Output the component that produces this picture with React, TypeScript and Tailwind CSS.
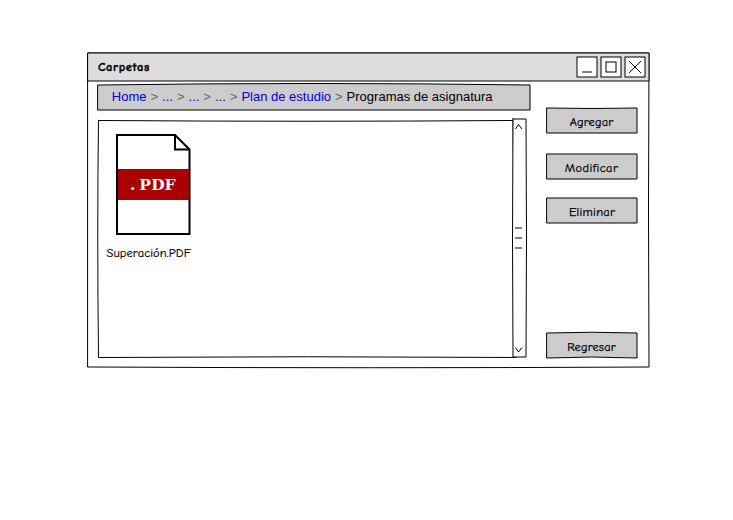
import type { ReactNode } from "react";

const comic = "font-['Comic_Sans_MS','Comic_Neue','Lato',sans-serif]";

function Sketch({ d, fill = "#ffffff" }: { d: string; fill?: string }) {
  return (
    <svg className="pointer-events-none absolute inset-0 h-full w-full overflow-visible" aria-hidden="true">
      <path d={d} fill={fill} stroke="#000" strokeWidth="1" strokeLinejoin="round" strokeLinecap="round" />
    </svg>
  );
}

function ControlBox({ children }: { children: ReactNode }) {
  return (
    <svg className="h-5 w-5 overflow-visible" fill="none" stroke="#000" strokeWidth="1">
      <rect width="20" height="20" fill="#fff" />
      {children}
    </svg>
  );
}

function SketchButton({ label, d, className, textClass }: { label: string; d: string; className: string; textClass: string }) {
  return (
    <button className={`relative flex h-[25px] w-[90px] items-center justify-center ${className}`}>
      <Sketch d={d} fill="#cccccc" />
      <span className={`relative mt-0.5 whitespace-nowrap text-[12.4px] leading-4 [-webkit-text-stroke:0.25px_#000] ${comic} ${textClass}`}>{label}</span>
    </button>
  );
}

function Sep() {
  return <span className="text-[#666666]">&gt;</span>;
}

function PdfFile() {
  return (
    <div className="ml-[8.5px] mt-[12px] w-[85px]">
      <svg className="ml-[9.5px] h-[102px] w-[76px]" viewBox="0 0 76 102">
        <path d="M1 2H59L73.5 16.5V101H1Z" fill="#fff" stroke="#000" strokeWidth="2" />
        <path d="M59 1.5V16.5H73.5" fill="none" stroke="#000" strokeWidth="2" />
        <rect x="2" y="36" width="71" height="31" fill="#a90000" />
        <text x="14 23.2 35.3 48.5" y="57" fill="#fff" className="font-['DejaVu_Serif',serif] text-[15.5px] font-bold">.PDF</text>
      </svg>
      <div className={`mt-[10px] whitespace-nowrap text-[12.4px] leading-4 tracking-[0.1px] [-webkit-text-stroke:0.2px_#000] ${comic}`}>Superación.PDF</div>
    </div>
  );
}

export default function App() {
  return (
    <main className="h-[520px] w-[733px] bg-white pl-[88px] pt-[53px] text-black">
      <section className="relative h-[314px] w-[561px]">
        <Sketch d="M0 0H561Q560 155 561 314Q285 315.5 0 314Z" />
        <header className="relative flex h-7 items-center justify-between pl-[10px] pr-1">
          <Sketch d="M0 0H561V28H0Z" fill="#dddddd" />
          <h1 className={`relative text-[12.4px] font-black leading-4 tracking-[0.65px] [-webkit-text-stroke:0.4px_#000] ${comic}`}>Carpetas</h1>
          <div className="relative flex gap-1">
            <ControlBox><path d="M5 15H15" /></ControlBox>
            <ControlBox><rect x="5" y="5" width="10" height="10" /></ControlBox>
            <ControlBox><path d="M4 4L16 16M16 4L4 16" /></ControlBox>
          </div>
        </header>
        <div className="relative flex pl-[10px]">
          <div className="w-[432px] pt-1">
            <nav className="relative h-[25px] pl-[13.8px]">
              <Sketch d="M0 0Q216 -3 432 0V25H0Z" fill="#cccccc" />
              <div className="relative flex gap-1 whitespace-nowrap font-['Liberation_Sans',Arial,sans-serif] text-[13px] leading-[24px] text-[#0000e6]">
                <a>Home</a><Sep /><a>...</a><Sep /><a>...</a><Sep /><a>...</a><Sep />
                <a>Plan de estudio</a><Sep /><span className="text-black">Programas de asignatura</span>
              </div>
            </nav>
            <div className="mt-[9px] flex h-[238px]">
              <div className="relative mt-[2px] h-[236px] w-[415px]">
                <Sketch d="M0.5 -0.5Q210 1 415 -0.5L418 236.5Q210 235 0.5 236.5Q-1 110 0.5 -0.5Z" />
                <div className="relative flow-root"><PdfFile /></div>
              </div>
              <div className="relative h-[238px] w-[13px]">
                <Sketch d="M0 0H13Q14 119 13 238H0Q-1 119 0 0Z" />
                <svg className="relative h-full w-full overflow-visible" fill="none" stroke="#000" strokeWidth="1">
                  <path d="M2.5 10L5.5 5.5L9 10M2.5 228.5L5.5 233L9 228.5" />
                  <path d="M2 109H9M2 119H9M2 129H9" />
                </svg>
              </div>
            </div>
          </div>
          <aside className="ml-[17px] pt-[27px]">
            <SketchButton label="Agregar" d="M0 0Q45 1 90 0V25H0Z" className="" textClass="-left-[0.5px] top-[0.5px] tracking-[0.15px]" />
            <SketchButton label="Modificar" d="M0 0H90V25H0Z" className="mt-[21px]" textClass="-left-[0.5px] top-[0.5px] tracking-[0.4px]" />
            <SketchButton label="Eliminar" d="M0 0H90V25H0Z" className="mt-[19px]" textClass="top-[0.5px] tracking-[0.25px]" />
            <SketchButton label="Regresar" d="M0 0Q45 -1.5 90 0V25Q45 23 0 25Z" className="mt-[110px]" textClass="-left-[0.5px] top-[0.5px] tracking-[0.15px]" />
          </aside>
        </div>
      </section>
    </main>
  );
}
